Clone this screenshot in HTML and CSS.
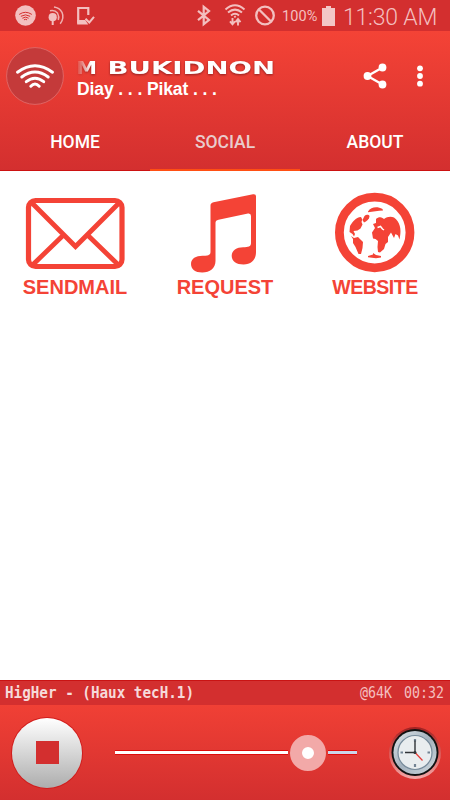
FILE: index.html
```html
<!DOCTYPE html>
<html lang="en">
<head>
  <meta charset="UTF-8">
  <meta name="viewport" content="width=device-width, initial-scale=1.0">
  <title>Radio Bukidnon</title>
  <link rel="stylesheet" href="styles.css">
</head>
<body>
  <div class="app">
    <!-- status bar -->
    <div class="status-bar">
      <svg class="status-icons" width="96" height="31" viewBox="0 0 96 31">
        <circle cx="25.500" cy="15.500" r="10.300" fill="#f3bfbf"/>
        <g fill="none" stroke="#d32f2f" stroke-width="1" stroke-linecap="round">
          <path d="M19.500 14.200q6-4 12 0M21.200 16.100q4.300-2.700 8.600 0M22.700 18q2.800-2 5.600 0M24.300 19.600q1.200-.8 2.400 0"/>
        </g>
        <circle cx="52.700" cy="17.200" r="4.100" fill="#f3bfbf"/>
        <path d="M52.700 18v7" stroke="#f3bfbf" stroke-width="2"/>
        <g fill="none" stroke="#f0b0b0" stroke-width="1.500">
          <path d="M50 10.700q5-1 7.500 2.300q2 3.500 .8 7M54 7q5.500 .8 8 5.300q2.500 6-1.800 11.500"/>
        </g>
        <path d="M88.300 15V8H78.200v14.500H86" fill="none" stroke="#f3bfbf" stroke-width="2.200"/>
        <path d="M77.200 20h8l3 4.500H77.200z" fill="#f3bfbf"/>
        <path d="M85.500 18.800l3.800 3.700 4.700-5.700" fill="none" stroke="#f3bfbf" stroke-width="2"/>
      </svg>
      <div class="status-right">
        <svg width="82" height="31" viewBox="194 0 82 31">
          <path d="M198 10.800l11 9.200-5.300 4.200V6.800l5.300 4.200-11 9.200" fill="none" stroke="#f3bfbf" stroke-width="2.200"/>
          <g fill="none" stroke="#f3bfbf" stroke-width="2">
            <path d="M225.500 9.400q9.500-8.200 19 0M228 12.500q7-5.800 14 0M231 15.500q4-3.400 8 0"/>
          </g>
          <path d="M234.500 16l1 1.500M232.500 18v6m-2.500-2.700l2.500 3 2.500-3M238 25.500v-6m-2.500 2.600l2.500-3 2.500 3" fill="none" stroke="#f3bfbf" stroke-width="1.900"/>
          <circle cx="265" cy="15.500" r="8.800" fill="none" stroke="#f3bfbf" stroke-width="2.300"/>
          <path d="M259 9.500l12 12" stroke="#f3bfbf" stroke-width="2.300"/>
        </svg>
        <span class="battery-text">100%</span>
        <svg class="battery" width="13" height="20" viewBox="0 0 13 20">
          <path d="M4 0h5v2h4v18H0V2h4z" fill="#f3c6c6"/>
        </svg>
        <span class="clock-text">11:30 AM</span>
      </div>
    </div>

    <!-- header and tabs -->
    <header class="header">
      <div class="toolbar">
        <svg class="logo" width="58" height="58" viewBox="0 0 58 58">
          <circle cx="29" cy="29" r="28.400" fill="#c43a3a" stroke="#e17070" stroke-width=".8"/>
          <g fill="none" stroke="#fff" stroke-width="3" stroke-linecap="round">
            <path d="M11.500 25.200q17.500-13 35 0M15.800 30q13.200-10 26.400 0M20.300 34.700q8.700-7 17.400 0M24.800 39.200q4.200-4.300 8.400 0"/>
          </g>
        </svg>
        <div class="titles">
          <svg class="station" width="200" height="22" viewBox="0 0 200 22">
            <defs>
              <linearGradient id="fade" gradientUnits="userSpaceOnUse" x1="0" y1="0" x2="15" y2="0">
                <stop offset="0" stop-color="#fff" stop-opacity="0"/>
                <stop offset="1" stop-color="#fff"/>
              </linearGradient>
            </defs>
            <text x="0" y="18.300" textLength="21" lengthAdjust="spacingAndGlyphs" fill="url(#fade)">M</text>
            <text x="31.500" y="18.300" textLength="167.500" lengthAdjust="spacingAndGlyphs">BUKIDNON</text>
          </svg>
          <div class="slogan">Diay . . . Pikat . . .</div>
        </div>
        <svg class="share" width="24" height="26" viewBox="0 0 24 26">
          <path d="M19.500 4.500L4.500 13l15 8.500" fill="none" stroke="#fff" stroke-width="2.300"/>
          <g fill="#fff">
            <circle cx="19.500" cy="4.500" r="3.900"/>
            <circle cx="4.500" cy="13" r="3.900"/>
            <circle cx="19.500" cy="21.500" r="3.900"/>
          </g>
        </svg>
        <svg class="more" width="6" height="22" viewBox="0 0 6 22" fill="#fff">
          <circle cx="3" cy="3.300" r="2.900"/>
          <circle cx="3" cy="11" r="2.900"/>
          <circle cx="3" cy="18.700" r="2.900"/>
        </svg>
      </div>
      <nav class="tabs">
        <div class="tab">HOME</div>
        <div class="tab active">SOCIAL</div>
        <div class="tab">ABOUT</div>
      </nav>
    </header>

    <!-- social links -->
    <main class="content">
      <div class="link">
        <svg width="150" height="105" viewBox="0 0 150 105">
          <rect x="28.500" y="29.500" width="93.500" height="66" rx="7" fill="none" stroke="#f44336" stroke-width="5.200"/>
          <path d="M31 31l44.500 44.500L120 31M64 63.500L32.500 94M87 63.500L118.500 94" fill="none" stroke="#f44336" stroke-width="4.800"/>
        </svg>
        <span class="label mail">SENDMAIL</span>
      </div>
      <div class="link">
        <svg width="150" height="105" viewBox="0 0 150 105">
          <path d="M60.500 34.500q0-2.500 3-3.200l39.500-8q3-.5 3 2V81c0 8-5 12.500-12.500 12.500c-7 0-11.800-3.300-11.800-8.500c0-6 5-8.800 11.500-8.800c5 0 7.800-.7 7.800-4V45q0-3-3-2.500l-29.500 6.200q-3 .6-3 3V90c0 7-5.500 11.500-13.300 11.500c-7 0-11.200-3.500-11.200-8.500c0-5.500 5-8.300 11.500-8.300c5.500 0 8-.4 8-4z" fill="#f44336"/>
        </svg>
        <span class="label request">REQUEST</span>
      </div>
      <div class="link">
        <svg width="150" height="105" viewBox="0 0 150 105">
          <circle cx="74.700" cy="61.500" r="35.300" fill="none" stroke="#f44336" stroke-width="8.800"/>
          <g fill="#f44336">
            <path d="M68 40.500c3-4.500 9-5.300 14.500-2.500l.5 1.500c-5 .5-10 .8-15 1.800z"/>
            <path d="M62.500 49l2-4c2-2 4.500-1 5 0c0 3-3 5.500-5.500 6.500z"/>
            <path d="M61 46c-5.500.5-8.500 5-11 9l-.5 6l3 2l1.500 2.500l1-2.500l-1.500-3l4-.5l3-2l2-4l-1-2.500l.8-2.500z"/>
            <path d="M51 65l3 2l4-1l3 3l2 2l-.5 6l-1.500 6h-2.500l-3-7l-2.500-4v-4z"/>
            <path d="M76 48c2-2 5-2 6.500-1l1.500 1c3-2.500 7-3 10-1.500c6 4 7.500 12 6 19l-.5 3l-1.500-4l-2.500-1.500l-1.500 4l-3-5.500l-3 4.500v5l-2.500 2l-1.500 5l-4 3.500l-2-.5l-.5-5l.5-6l-2.500-2l-2.500-.5l-1-6l3-4.500l-2-4l3-1z"/>
            <path d="M68 85l5-1.500v-1.500l3 2l5 1v1.500l-5 .8l-8-1z"/>
          </g>
          <path d="M77.500 56.500l3-1 2 2.500 1.500 1" fill="none" stroke="#fff" stroke-width="1.500"/>
        </svg>
        <span class="label web">WEBSITE</span>
      </div>
    </main>

    <!-- now playing -->
    <div class="ticker">
      <svg width="450" height="24" viewBox="0 0 450 24">
        <text class="song" x="5" y="17" textLength="189" lengthAdjust="spacingAndGlyphs">HigHer - (Haux tecH.1)</text>
        <text x="360" y="17" textLength="32" lengthAdjust="spacingAndGlyphs">@64K</text>
        <text x="404" y="17" textLength="40" lengthAdjust="spacingAndGlyphs">00:32</text>
      </svg>
    </div>
    <footer class="player">
      <div class="stop"><div class="stop-square"></div></div>
      <div class="volume">
        <div class="track"></div>
        <div class="knob"></div>
        <div class="track rest"></div>
      </div>
      <svg class="timer" width="54" height="54" viewBox="0 0 54 54">
        <defs>
          <linearGradient id="halo" x2="0" y2="1">
            <stop offset="0" stop-color="#9e2020"/>
            <stop offset=".5" stop-color="#dc5a58"/>
            <stop offset="1" stop-color="#f3aaaa"/>
          </linearGradient>
          <linearGradient id="rim" x2="1" y2="1">
            <stop offset="0" stop-color="#dfe6eb"/>
            <stop offset=".5" stop-color="#a3b1bd"/>
            <stop offset="1" stop-color="#d0d9df"/>
          </linearGradient>
        </defs>
        <circle cx="27" cy="27" r="26" fill="url(#halo)"/>
        <circle cx="27" cy="26.500" r="23.500" fill="#111"/>
        <circle cx="27" cy="26.500" r="21.600" fill="url(#rim)"/>
        <circle cx="27" cy="26.500" r="17" fill="#e9edef" stroke="#778b9b" stroke-width="1.200"/>
        <path d="M27 13v2.500M27 38v3M12.500 26.500h2.500M39.500 26.500h2.500" stroke="#728393" stroke-width="2.200"/>
        <path d="M27 27.500V14.500M28 26.500H17" stroke="#303438" stroke-width="1.400"/>
        <path d="M27 26.500l7.500 8" stroke="#e53935" stroke-width="1.200"/>
        <circle cx="27" cy="26.500" r="1.500" fill="#303438"/>
      </svg>
    </footer>
  </div>
</body>
</html>
```
FILE: styles.css
```css
body {
  margin: 0;
  font-family: Roboto, "Liberation Sans", sans-serif;
  color: white;
}

.app {
  display: flex;
  flex-direction: column;
  width: 450px;
  height: 800px;
  background: white;
  overflow: hidden;
}

svg {
  display: block;
  flex: none;
}

/* status bar */
.status-bar {
  display: flex;
  justify-content: space-between;
  height: 31px;
  background: #d32f2f;
  color: #f3bfbf;
}

.status-right {
  display: flex;
  align-items: center;
  width: 256px;
}

.battery-text {
  flex: none;
  width: 46px;
  padding: 3px 0 0 6px;
  box-sizing: border-box;
  font-size: 14.5px;
  line-height: 28px;
  letter-spacing: 0.1px;
  white-space: nowrap;
}

.clock-text {
  margin-left: 8px;
  padding-top: 3px;
  font-size: 23px;
  font-weight: 300;
  letter-spacing: -0.2px;
  white-space: nowrap;
}

/* header */
.header {
  height: 140px;
  background: linear-gradient(#f44336, #d32f2f);
}

.toolbar {
  display: flex;
  align-items: center;
  height: 82px;
  padding: 5px 0 0 6px;
  box-sizing: border-box;
}

.toolbar .logo {
  margin-top: 3px;
}

.titles {
  width: 200px;
  margin: 6px 0 0 12px;
}

.station {
  font-family: "DejaVu Sans", sans-serif;
  font-size: 18px;
  font-weight: bold;
  fill: white;
  filter: drop-shadow(0 1px 1px #8f2020);
}

.slogan {
  font-family: "Liberation Sans", Arial, sans-serif;
  font-size: 17.5px;
  font-weight: bold;
  line-height: 22px;
  letter-spacing: -0.1px;
  margin-left: 1px;
}

.share {
  margin: 2px 0 0 87px;
}

.more {
  margin: 2px 0 0 30px;
}

.tabs {
  display: flex;
  height: 58px;
}

.tab {
  flex: 1;
  box-sizing: border-box;
  border-bottom: 1px solid #cc1212;
  font-size: 17.5px;
  font-weight: 500;
  line-height: 58px;
  text-align: center;
}

.tab.active {
  border-bottom: 2px solid #ff4f13;
  color: #e9cccc;
}

/* links */
.content {
  display: flex;
  flex: 1;
}

.link {
  width: 150px;
  display: flex;
  flex-direction: column;
  align-items: center;
}

.label {
  font-family: "Liberation Sans", Arial, sans-serif;
  font-size: 20px;
  font-weight: bold;
  line-height: 22px;
  color: #f44336;
}

.label.web {
  font-size: 19.5px;
  letter-spacing: -0.5px;
}

/* now playing */
.ticker {
  height: 24px;
  background: #d32f2f;
  border-top: 1px solid #c91313;
  font-family: "DejaVu Sans Mono", monospace;
  font-size: 15.5px;
}

.ticker text {
  fill: #f3bfbf;
}

.ticker .song {
  font-weight: bold;
  fill: #f6dada;
}

.player {
  display: flex;
  align-items: center;
  height: 95px;
  background: linear-gradient(#f04035, #d32f2f);
}

.stop {
  display: flex;
  align-items: center;
  justify-content: center;
  width: 70px;
  height: 70px;
  margin-left: 12px;
  border-radius: 50%;
  background: linear-gradient(white, #adadad);
  box-shadow: 0 0 0 1px #cf1d1d;
}

.stop-square {
  width: 23px;
  height: 23px;
  background: #d32f2f;
}

.volume {
  display: flex;
  align-items: center;
  margin-left: 33px;
  width: 242px;
}

.track {
  width: 173px;
  height: 3px;
  background: white;
  box-shadow: 0 1px 0 #dd0c0c, 0 -1px 0 #dd0c0c;
}

.track.rest {
  width: 29px;
  margin-left: 2px;
  background: #cbd5e8;
}

.knob {
  width: 12px;
  height: 12px;
  margin-left: 2px;
  border: 12px solid #f2a9a8;
  border-radius: 50%;
  background: white;
}

.timer {
  margin-left: 31px;
}
```
